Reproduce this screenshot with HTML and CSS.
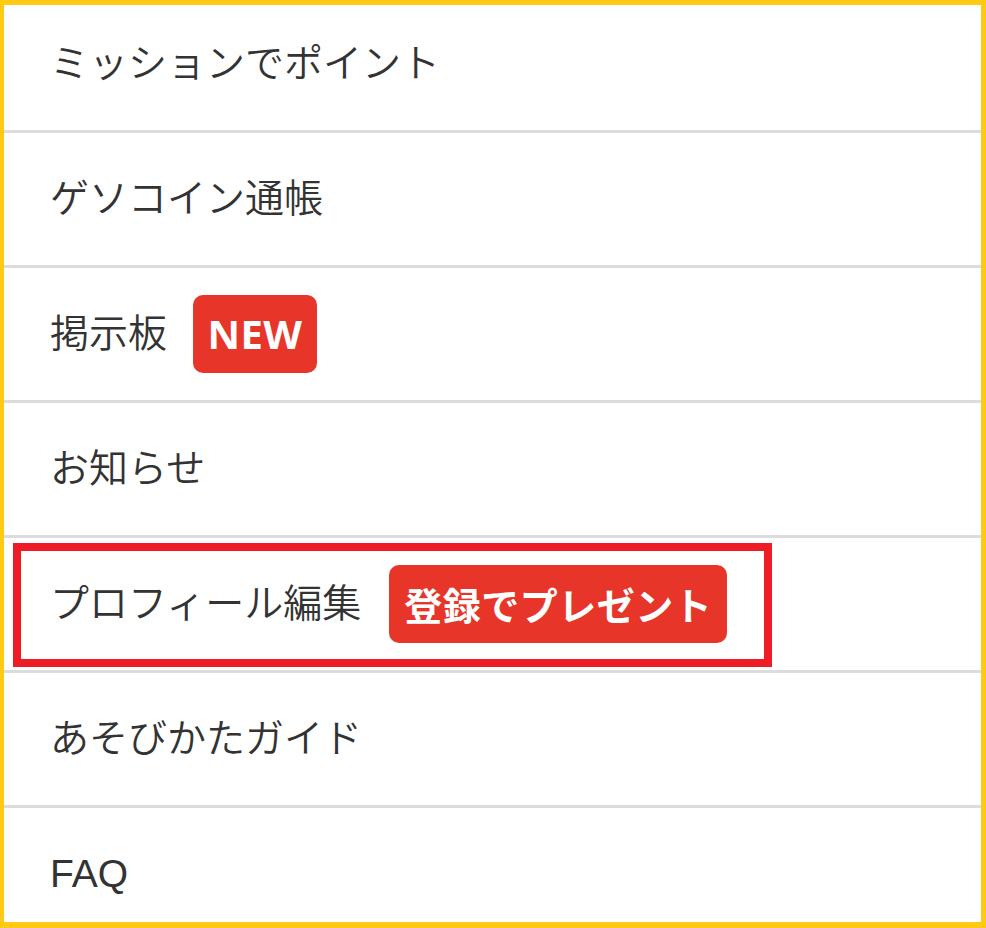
FILE: index.html
```html
<!DOCTYPE html>
<html lang="ja">
<head>
<meta charset="utf-8">
<link rel="stylesheet" href="styles.css">
</head>
<body>
<div class="frame">
  <ul class="menu">
    <li class="item"><span class="label">ミッションでポイント</span></li>
    <li class="item"><span class="label">ゲソコイン通帳</span></li>
    <li class="item"><span class="label">掲示板</span><span class="badge badge-new">NEW</span></li>
    <li class="item"><span class="label">お知らせ</span></li>
    <li class="item item-marked"><span class="label">プロフィール編集</span><span class="badge badge-gift">登録でプレゼント</span><span class="highlight"></span></li>
    <li class="item"><span class="label">あそびかたガイド</span></li>
    <li class="item"><span class="label">FAQ</span></li>
  </ul>
</div>
</body>
</html>
```

FILE: styles.css
```css
html, body {
  margin: 0;
  padding: 0;
  background: #ffffff;
}

.frame {
  width: 986px;
  height: 928px;
  box-sizing: border-box;
  border-style: solid;
  border-color: #ffc914;
  border-width: 5px 5px 6px 4px;
  overflow: hidden;
  background: #ffffff;
}

.menu {
  list-style: none;
  margin: -7px 0 0 0;
  padding: 0;
}

.item {
  position: relative;
  height: 132px;
  border-bottom: 3px solid #dcdcdc;
  display: flex;
  align-items: center;
  padding-left: 46px;
  gap: 26px;
  font-family: "Liberation Sans", "Noto Sans CJK JP", sans-serif;
  font-size: 39px;
  font-weight: 350;
  color: #333333;
}

.label {
  line-height: 1;
  padding-bottom: 2px;
}

.badge {
  display: inline-flex;
  align-items: center;
  justify-content: center;
  height: 78px;
  box-sizing: border-box;
  border-radius: 10px;
  background: #e8352a;
  color: #ffffff;
  font-weight: 700;
  line-height: 1;
}

.badge-new {
  width: 124px;
  font-size: 40px;
  font-family: "Noto Sans", "Noto Sans CJK JP", sans-serif;
  letter-spacing: 0.5px;
}

.badge-gift {
  width: 338px;
  font-size: 38px;
  font-family: "Noto Sans CJK JP", sans-serif;
  letter-spacing: 0.5px;
}

.item-marked {
  gap: 28px;
}

.highlight {
  position: absolute;
  top: 5px;
  left: 9px;
  width: 759px;
  height: 124px;
  box-sizing: border-box;
  border: 8px solid #ee1c25;
  pointer-events: none;
}
```
